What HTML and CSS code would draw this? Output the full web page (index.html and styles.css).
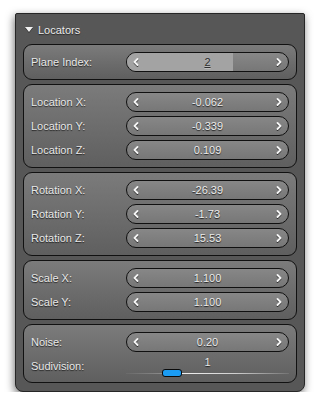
FILE: index.html
```html
<!DOCTYPE html>
<html>
<head>
<meta charset="utf-8">
<link rel="stylesheet" href="styles.css">
</head>
<body>
<div class="panel">
  <div class="header"><span class="tri"></span><span class="title">Locators</span></div>

  <div class="group">
    <div class="row">
      <span class="label">Plane Index:</span>
      <div class="field">
        <div class="fill" style="width:66%"></div>
        <svg class="chev left" viewBox="0 0 6 8" width="6" height="8"><path d="M4.5 1 L1.5 4 L4.5 7"/></svg>
        <span class="val dark">2</span>
        <svg class="chev right" viewBox="0 0 6 8" width="6" height="8"><path d="M1.5 1 L4.5 4 L1.5 7"/></svg>
      </div>
    </div>
  </div>

  <div class="group">
    <div class="row">
      <span class="label">Location X:</span>
      <div class="field">
        <svg class="chev left" viewBox="0 0 6 8" width="6" height="8"><path d="M4.5 1 L1.5 4 L4.5 7"/></svg>
        <span class="val">-0.062</span>
        <svg class="chev right" viewBox="0 0 6 8" width="6" height="8"><path d="M1.5 1 L4.5 4 L1.5 7"/></svg>
      </div>
    </div>
    <div class="row">
      <span class="label">Location Y:</span>
      <div class="field">
        <svg class="chev left" viewBox="0 0 6 8" width="6" height="8"><path d="M4.5 1 L1.5 4 L4.5 7"/></svg>
        <span class="val">-0.339</span>
        <svg class="chev right" viewBox="0 0 6 8" width="6" height="8"><path d="M1.5 1 L4.5 4 L1.5 7"/></svg>
      </div>
    </div>
    <div class="row">
      <span class="label">Location Z:</span>
      <div class="field">
        <svg class="chev left" viewBox="0 0 6 8" width="6" height="8"><path d="M4.5 1 L1.5 4 L4.5 7"/></svg>
        <span class="val">0.109</span>
        <svg class="chev right" viewBox="0 0 6 8" width="6" height="8"><path d="M1.5 1 L4.5 4 L1.5 7"/></svg>
      </div>
    </div>
  </div>

  <div class="group">
    <div class="row">
      <span class="label">Rotation X:</span>
      <div class="field">
        <svg class="chev left" viewBox="0 0 6 8" width="6" height="8"><path d="M4.5 1 L1.5 4 L4.5 7"/></svg>
        <span class="val">-26.39</span>
        <svg class="chev right" viewBox="0 0 6 8" width="6" height="8"><path d="M1.5 1 L4.5 4 L1.5 7"/></svg>
      </div>
    </div>
    <div class="row">
      <span class="label">Rotation Y:</span>
      <div class="field">
        <svg class="chev left" viewBox="0 0 6 8" width="6" height="8"><path d="M4.5 1 L1.5 4 L4.5 7"/></svg>
        <span class="val">-1.73</span>
        <svg class="chev right" viewBox="0 0 6 8" width="6" height="8"><path d="M1.5 1 L4.5 4 L1.5 7"/></svg>
      </div>
    </div>
    <div class="row">
      <span class="label">Rotation Z:</span>
      <div class="field">
        <svg class="chev left" viewBox="0 0 6 8" width="6" height="8"><path d="M4.5 1 L1.5 4 L4.5 7"/></svg>
        <span class="val">15.53</span>
        <svg class="chev right" viewBox="0 0 6 8" width="6" height="8"><path d="M1.5 1 L4.5 4 L1.5 7"/></svg>
      </div>
    </div>
  </div>

  <div class="group">
    <div class="row">
      <span class="label">Scale X:</span>
      <div class="field">
        <svg class="chev left" viewBox="0 0 6 8" width="6" height="8"><path d="M4.5 1 L1.5 4 L4.5 7"/></svg>
        <span class="val">1.100</span>
        <svg class="chev right" viewBox="0 0 6 8" width="6" height="8"><path d="M1.5 1 L4.5 4 L1.5 7"/></svg>
      </div>
    </div>
    <div class="row">
      <span class="label">Scale Y:</span>
      <div class="field">
        <svg class="chev left" viewBox="0 0 6 8" width="6" height="8"><path d="M4.5 1 L1.5 4 L4.5 7"/></svg>
        <span class="val">1.100</span>
        <svg class="chev right" viewBox="0 0 6 8" width="6" height="8"><path d="M1.5 1 L4.5 4 L1.5 7"/></svg>
      </div>
    </div>
  </div>

  <div class="group">
    <div class="row">
      <span class="label">Noise:</span>
      <div class="field">
        <svg class="chev left" viewBox="0 0 6 8" width="6" height="8"><path d="M4.5 1 L1.5 4 L4.5 7"/></svg>
        <span class="val">0.20</span>
        <svg class="chev right" viewBox="0 0 6 8" width="6" height="8"><path d="M1.5 1 L4.5 4 L1.5 7"/></svg>
      </div>
    </div>
    <div class="row slider-row">
      <span class="label">Sudivision:</span>
      <div class="slider">
        <span class="sval">1</span>
        <div class="track">
          <span class="tl"></span>
          <span class="thumb"></span>
          <span class="tr"></span>
        </div>
      </div>
    </div>
  </div>
</div>
</body>
</html>
```

FILE: styles.css
```css
* { box-sizing: border-box; }
html, body { margin: 0; padding: 0; background: #ffffff; }
body {
  font-family: "Liberation Sans", Arial, sans-serif;
  font-size: 11px;
  color: #e6e6e6;
  padding: 13px 0 0 15px;
}
.panel {
  width: 290px;
  height: 379px;
  background: #575757;
  border: 1px solid #262626;
  border-radius: 2px 2px 8px 8px;
  box-shadow: -1px 3px 8px rgba(0,0,0,0.55);
  padding: 0 7px;
}
.header {
  height: 30px;
  display: flex;
  align-items: center;
  padding-left: 2px;
  padding-top: 1px;
}
.tri {
  width: 0; height: 0;
  border-left: 4px solid transparent;
  border-right: 4px solid transparent;
  border-top: 5px solid #f2f2f2;
  margin-right: 5px;
  filter: drop-shadow(0 1px 0 rgba(0,0,0,0.5));
}
.title {
  color: #ececec;
  text-shadow: 0 1px 1px rgba(0,0,0,0.6);
}
.group {
  border: 1px solid #111;
  border-radius: 9px;
  background: linear-gradient(#7b7b7b, #5f5f5f);
  padding: 7px;
  display: flex;
  flex-direction: column;
  gap: 4px;
  margin-bottom: 4px;
}
.row {
  display: flex;
  align-items: center;
  height: 20px;
}
.label {
  flex: 1;
  color: #e8e8e8;
  text-shadow: 0 1px 1px rgba(0,0,0,0.7);
}
.field {
  position: relative;
  width: 163px;
  height: 20px;
  border: 1px solid #101010;
  border-radius: 10px;
  background: linear-gradient(#878787, #777777);
  display: flex;
  align-items: center;
  justify-content: space-between;
  padding: 0 6px;
  overflow: hidden;
}
.fill {
  position: absolute;
  left: 0; top: 0; bottom: 0;
  background: #a3a3a3;
}
.chev {
  position: relative;
  fill: none;
  stroke: #f4f4f4;
  stroke-width: 1.8;
  stroke-linecap: round;
  stroke-linejoin: round;
  filter: drop-shadow(0 1px 0 rgba(0,0,0,0.6));
}
.val {
  position: relative;
  color: #ececec;
  text-shadow: 0 1px 1px rgba(0,0,0,0.75);
}
.val.dark {
  color: #2e2e2e;
  text-decoration: underline;
  text-shadow: 0 1px 0 rgba(255,255,255,0.3);
}
.slider-row { height: 19px; }
.slider {
  width: 163px;
  height: 19px;
  display: flex;
  flex-direction: column;
  align-items: center;
}
.sval {
  line-height: 13px;
  color: #e8e8e8;
  text-shadow: 0 1px 1px rgba(0,0,0,0.7);
}
.track {
  width: 163px;
  height: 8px;
  display: flex;
  align-items: center;
}
.tl {
  width: 36px;
  height: 1px;
  background: linear-gradient(90deg, rgba(120,120,120,0.3), #8a8a8a);
}
.thumb {
  width: 20px;
  height: 8px;
  border: 1px solid #0a0a0a;
  border-radius: 3px;
  background: #1a9cf5;
}
.tr {
  flex: 1;
  height: 1px;
  background: linear-gradient(90deg, #f0f0f0, #cfcfcf 50%, rgba(140,140,140,0.4));
}
```
